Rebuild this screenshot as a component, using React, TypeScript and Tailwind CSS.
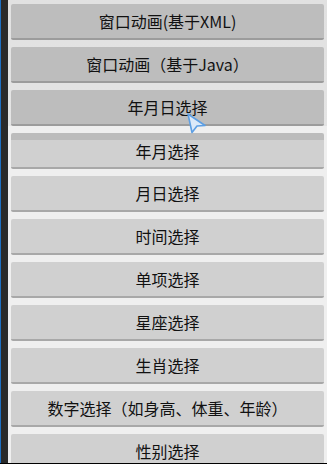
import React from 'react';

const items = [
  '窗口动画(基于XML)',
  '窗口动画（基于Java）',
  '年月日选择',
  '年月选择',
  '月日选择',
  '时间选择',
  '单项选择',
  '星座选择',
  '生肖选择',
  '数字选择（如身高、体重、年龄）',
  '性别选择',
];

export default function App() {
  return (
    <div className="relative w-[327px] h-[464px] overflow-hidden flex flex-col bg-black">
      <div className="flex h-[463px]">
        {/* desktop edge behind the emulator */}
        <div className="w-px bg-[#1d6fc2]" />
        <div className="w-[7px] bg-[#2a2a2a]" />

        <div
          className="flex-1 flex flex-col gap-[7px] pt-[4px] pl-[3px] pr-[3px] overflow-hidden bg-[linear-gradient(#e1e1e1_0,#e4e4e4_126px,#efefef_126px)]"
          style={{ fontFamily: '"Noto Sans CJK SC", "Noto Sans", sans-serif' }}
        >
          {items.map((label, i) => {
            const dim = i < 3;
            return (
              <div
                key={label}
                className={
                  dim
                    ? 'shrink-0 h-[36px] flex items-center justify-center rounded-[2px] bg-[#bdbdbd] border-b-2 border-[#9c9c9c] text-[16px] leading-none text-[#111]'
                    : i === 3
                    ? 'shrink-0 h-[36px] flex items-center justify-center rounded-[2px] bg-[#d0d0d0] border-t-[7px] border-t-[#bcbcbc] border-b-2 border-b-[#a8a8a8] text-[16px] leading-none text-[#111] pb-[5px]'
                    : 'shrink-0 h-[36px] flex items-center justify-center rounded-[2px] bg-[#d0d0d0] border-b-2 border-[#a8a8a8] text-[16px] leading-none text-[#111]'
                }
              >
                {label}
              </div>
            );
          })}
        </div>
      </div>

      {/* mouse pointer over the third row */}
      <svg className="absolute left-[186px] top-[112px]" width="22" height="22" viewBox="0 0 22 22">
        <path d="M2 2 L19 13.5 L11 14 L6 20.5 Z" fill="#dbe9f9" stroke="#5d9fe4" strokeWidth="1.6" strokeLinejoin="round" />
      </svg>
    </div>
  );
}
